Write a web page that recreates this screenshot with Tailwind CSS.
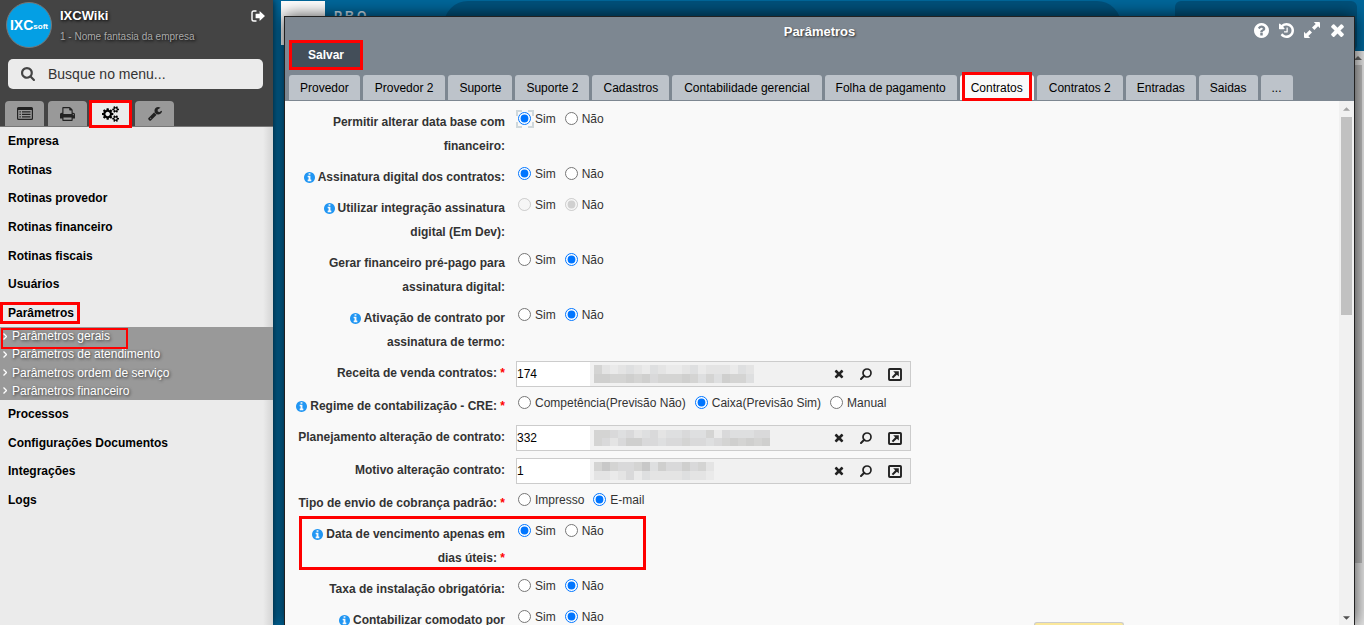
<!DOCTYPE html>
<html lang="pt-BR">
<head>
<meta charset="utf-8">
<title>Parâmetros</title>
<script src="https://cdn.jsdelivr.net/npm/@tailwindcss/browser@4"></script>
</head>
<body class="h-screen overflow-hidden bg-[#00669a] font-['Liberation_Sans',Arial,sans-serif] text-xs text-black">

<svg class="hidden" aria-hidden="true">
  <symbol id="times" viewBox="250 250 1290 1400"><path d="M1490 1322q0 40-28 68l-136 136q-28 28-68 28t-68-28l-294-294-294 294q-28 28-68 28t-68-28l-136-136q-28-28-28-68t28-68l294-294-294-294q-28-28-28-68t28-68l136-136q28-28 68-28t68 28l294 294 294-294q28-28 68-28t68 28l136 136q28 28 28 68t-28 68l-294 294 294 294q28 28 28 68z"/></symbol>
  <symbol id="search" viewBox="64 128 1664 1664"><path d="M1216 832q0-185-131.5-316.5t-316.5-131.5-316.5 131.5-131.5 316.5 131.5 316.5 316.5 131.5 316.5-131.5 131.5-316.5zm512 832q0 52-38 90t-90 38q-54 0-90-38l-343-342q-179 124-399 124-143 0-273.5-55.5t-225-150-150-225-55.5-273.5 55.5-273.5 150-225 225-150 273.5-55.5 273.5 55.5 225 150 150 225 55.5 273.5q0 220-124 399l343 343q37 37 37 90z"/></symbol>
  <symbol id="info" viewBox="128 128 1536 1536"><path d="M1152 1376v-160q0-14-9-23t-23-9h-96v-512q0-14-9-23t-23-9h-320q-14 0-23 9t-9 23v160q0 14 9 23t23 9h96v320h-96q-14 0-23 9t-9 23v160q0 14 9 23t23 9h448q14 0 23-9t9-23zm-128-896v-160q0-14-9-23t-23-9h-192q-14 0-23 9t-9 23v160q0 14 9 23t23 9h192q14 0 23-9t9-23zm640 416q0 209-103 385.5t-279.5 279.5-385.5 103-385.5-103-279.5-279.5-103-385.5 103-385.5 279.5-279.5 385.5-103 385.5 103 279.5 279.5 103 385.5z"/></symbol>
  <symbol id="lens" viewBox="0 0 12 12"><circle cx="7" cy="5" r="4" fill="none" stroke="currentColor" stroke-width="1.7"/><path d="M4.2 7.8L1 11" stroke="currentColor" stroke-width="2" stroke-linecap="round"/></symbol>
  <symbol id="open" viewBox="0 0 14 13"><rect x="1" y="1" width="12" height="11" rx="0.8" fill="none" stroke="currentColor" stroke-width="1.9"/><path d="M5.2 3.2h5.6v5.4L8.9 6.8 5.2 10.3 3.7 8.9 7.2 5.2z"/></symbol>
</svg>

<div class="flex h-full">
  <aside class="relative z-10 w-[273px] shrink-0 bg-[#ebebeb] bg-linear-to-l from-black/10 to-transparent to-[10px] shadow-[0_0_8px_rgba(0,0,0,0.8)]">
    <header class="flex h-[127px] flex-col border-b border-[#777] bg-[#444]">
      <div class="flex gap-2 pl-[6px] pr-2 pt-[2px]">
        <div class="flex size-[46px] shrink-0 items-center justify-center rounded-full border border-[#777] bg-[#049fe4] font-bold text-white">
          <span class="text-[14px]">IXC</span><span class="pt-1 text-[8px]">soft</span>
        </div>
        <div class="flex-1 pt-[5px] [text-shadow:1px_1px_3px_#000]">
          <h1 class="text-[13px] leading-[18px] font-bold text-white">IXCWiki</h1>
          <p class="pt-1 text-[10px] leading-4 text-[#aaa]">1 - Nome fantasia da empresa</p>
        </div>
        <button class="mt-2 h-3 text-white" aria-label="Sair">
          <svg class="h-[12px] w-[14px]" viewBox="0 0 14 12" fill="currentColor"><path d="M5 1H2.8Q1 1 1 2.8v6.4Q1 11 2.8 11H5" fill="none" stroke="currentColor" stroke-width="1.4" stroke-linecap="round"/><path d="M4.6 3.8h4V1L14 6l-5.400 5V8.200h-4z"/></svg>
        </button>
      </div>
      <label class="mx-2 mr-[10px] mt-[11px] flex h-[30px] items-center gap-[13px] rounded-[5px] bg-[#ebebeb] pl-[13px] text-[#444]">
        <svg class="size-[14px]" fill="currentColor"><use href="#search"/></svg>
        <input type="text" placeholder="Busque no menu..." aria-label="Busque no menu" class="min-w-0 flex-1 bg-transparent text-[14px] text-[#333] outline-none placeholder:text-[#333]">
      </label>
      <div class="mt-3 flex flex-1 gap-1 pl-[5px] text-[#222]">
        <button class="flex w-[39px] items-center justify-center rounded-t-[4px] bg-[#999]" aria-label="Menu">
          <svg class="h-[13px] w-4" viewBox="0 0 16 13" fill="currentColor"><path d="M1.500 0h13Q16 0 16 1.500v10Q16 13 14.500 13h-13Q0 13 0 11.500v-10Q0 0 1.500 0zM1.200 3v8.300q0 .5.5.5h12.600q.5 0 .5-.5V3z" fill-rule="evenodd"/><path d="M2.500 4.300h1.300v1.200H2.500zM5 4.300h8.500v1.200H5zM2.500 6.800h1.300V8H2.500zM5 6.800h8.500V8H5zM2.500 9.300h1.300v1.200H2.500zM5 9.300h8.500v1.200H5z"/></svg>
        </button>
        <button class="flex w-[39px] items-center justify-center rounded-t-[4px] bg-[#999]" aria-label="Imprimir">
          <svg class="h-[14px] w-[15px]" viewBox="64 128 1664 1536" fill="currentColor"><path d="M448 1536h896v-256h-896v256zm0-640h896v-384h-160q-40 0-68-28t-28-68v-160h-640v640zm1152 64q0-26-19-45t-45-19-45 19-19 45 19 45 45 19 45-19 19-45zm128 0v416q0 13-9.500 22.500t-22.500 9.500h-224v160q0 40-28 68t-68 28h-960q-40 0-68-28t-28-68v-160h-224q-13 0-22.500-9.500t-9.500-22.500v-416q0-79 56.500-135.500t135.500-56.500h64v-544q0-40 28-68t68-28h672q40 0 88 20t76 48l152 152q28 28 48 76t20 88v256h64q79 0 135.500 56.500t56.500 135.500z"/></svg>
        </button>
        <button class="relative flex w-[39px] items-center justify-center bg-[#ebebeb] text-black" aria-label="Configurações">
          <svg class="h-[16px] w-[17px]" viewBox="0 0 1920 1792" fill="currentColor"><path d="M896 896q0-106-75-181t-181-75-181 75-75 181 75 181 181 75 181-75 75-181zm768 512q0-52-38-90t-90-38-90 38-38 90q0 53 37.500 90.500t90.500 37.500 90.500-37.500 37.500-90.500zm0-1024q0-52-38-90t-90-38-90 38-38 90q0 53 37.500 90.500t90.500 37.500 90.500-37.500 37.500-90.500zm-384 421v185q0 10-7 19.500t-16 10.500l-155 24q-11 35-32 76 34 48 90 115 7 11 7 20 0 12-7 19-23 30-82.500 89.500t-78.500 59.500q-11 0-21-7l-115-90q-37 19-77 31-11 108-23 155-7 24-30 24h-186q-11 0-20-7.500t-10-17.500l-23-153q-34-10-75-31l-118 89q-7 7-20 7-11 0-21-8-144-133-144-160 0-9 7-19 10-14 41-53t47-61q-23-44-35-82l-152-24q-10-1-17-9.500t-7-19.500v-185q0-10 7-19.500t16-10.500l155-24q11-35 32-76-34-48-90-115-7-11-7-20 0-12 7-20 22-30 82-89t79-59q11 0 21 7l115 90q34-18 77-32 11-108 23-154 7-24 30-24h186q11 0 20 7.500t10 17.500l23 153q34 10 75 31l118-89q8-7 20-7 11 0 21 8 144 133 144 160 0 8-7 19-12 16-42 54t-45 60q23 48 34 82l152 23q10 2 17 10.500t7 19.500zm640 533v140q0 16-149 31-12 27-30 52 51 113 51 138 0 4-4 7-122 71-124 71-8 0-46-47t-52-68q-20 2-30 2t-30-2q-14 21-52 68t-46 47q-2 0-124-71-4-3-4-7 0-25 51-138-18-25-30-52-149-15-149-31v-140q0-16 149-31 13-29 30-52-51-113-51-138 0-4 4-7 4-2 35-20t59-34 30-16q8 0 46 46.500t52 67.500q20-2 30-2t30 2q51-71 92-112l6-2q4 0 124 70 4 3 4 7 0 25-51 138 17 23 30 52 149 15 149 31zm0-1024v140q0 16-149 31-12 27-30 52 51 113 51 138 0 4-4 7-122 71-124 71-8 0-46-47t-52-68q-20 2-30 2t-30-2q-14 21-52 68t-46 47q-2 0-124-71-4-3-4-7 0-25 51-138-18-25-30-52-149-15-149-31v-140q0-16 149-31 13-29 30-52-51-113-51-138 0-4 4-7 4-2 35-20t59-34 30-16q8 0 46 46.500t52 67.500q20-2 30-2t30 2q51-71 92-112l6-2q4 0 124 70 4 3 4 7 0 25-51 138 17 23 30 52 149 15 149 31z"/></svg>
          <span class="absolute -inset-x-[2px] -top-px -bottom-[2px] border-[3px] border-[#f00]"></span>
        </button>
        <button class="ml-px flex w-[39px] items-center justify-center rounded-t-[4px] bg-[#999]" aria-label="Ferramentas">
          <svg class="size-[14px]" viewBox="64 128 1664 1664" fill="currentColor"><path d="M448 1472q0-26-19-45t-45-19-45 19-19 45 19 45 45 19 45-19 19-45zm644-420l-682 682q-37 37-90 37-52 0-91-37l-106-108q-38-36-38-90 0-53 38-91l681-681q39 98 114.500 173.500t173.500 114.500zm634-435q0 39-23 106-47 134-164.500 217.500t-258.500 83.500q-185 0-316.500-131.500t-131.500-316.500 131.500-316.500 316.500-131.500q58 0 121.500 16.500t107.500 46.500q16 11 16 28t-16 28l-293 169v224l193 107q5-3 79-48.500t135.500-81 70.500-35.500q15 0 23.500 10t8.500 25z"/></svg>
        </button>
      </div>
    </header>

    <nav class="font-bold">
      <div class="grid h-[200px] auto-rows-fr items-center px-2">
        <a href="#">Empresa</a>
        <a href="#">Rotinas</a>
        <a href="#">Rotinas provedor</a>
        <a href="#">Rotinas financeiro</a>
        <a href="#">Rotinas fiscais</a>
        <a href="#">Usuários</a>
        <a href="#" class="relative w-fit">Parâmetros<span class="absolute -inset-y-[3px] -left-2 -right-[6px] border-[3px] border-[#f00]"></span></a>
      </div>
      <div class="grid h-[73px] auto-rows-fr items-center bg-[#999] pl-[3px] font-normal text-white [text-shadow:1px_1px_3px_#333]">
        <a href="#" class="relative flex w-fit items-center gap-[5px]"><svg class="h-[7px] w-1" viewBox="0 0 4 7" fill="none" stroke="currentColor" stroke-width="1.300"><path d="M.5.5l3 3-3 3"/></svg>Parâmetros gerais<span class="absolute top-0 -bottom-[5px] -left-[2px] -right-[18px] border-2 border-[#f00]"></span></a>
        <a href="#" class="flex items-center gap-[5px]"><svg class="h-[7px] w-1" viewBox="0 0 4 7" fill="none" stroke="currentColor" stroke-width="1.300"><path d="M.5.5l3 3-3 3"/></svg>Parâmetros de atendimento</a>
        <a href="#" class="flex items-center gap-[5px]"><svg class="h-[7px] w-1" viewBox="0 0 4 7" fill="none" stroke="currentColor" stroke-width="1.300"><path d="M.5.5l3 3-3 3"/></svg>Parâmetros ordem de serviço</a>
        <a href="#" class="flex items-center gap-[5px]"><svg class="h-[7px] w-1" viewBox="0 0 4 7" fill="none" stroke="currentColor" stroke-width="1.300"><path d="M.5.5l3 3-3 3"/></svg>Parâmetros financeiro</a>
      </div>
      <div class="grid h-[114px] auto-rows-fr items-center px-2">
        <a href="#">Processos</a>
        <a href="#">Configurações Documentos</a>
        <a href="#">Integrações</a>
        <a href="#">Logs</a>
      </div>
    </nav>
  </aside>

  <main class="relative min-w-0 flex-1">
    <!-- page behind the dialog -->
    <div class="flex h-full flex-col">
      <div class="flex h-[51px] items-start pl-2 pr-[7px] pt-px">
        <div class="h-11 w-11 bg-white"></div>
        <div class="w-[119px] pl-[9px] pt-[7px] text-[12px] font-bold whitespace-nowrap text-[#c5d9e4]">P R O —</div>
        <div class="h-full flex-1 rounded-t-[24px] bg-[#00517b]"></div>
        <div class="ml-[54px] h-full w-[182px] rounded-[6px] bg-[#00517b]"></div>
      </div>
      <div class="flex flex-1 justify-end">
        <div class="flex w-3 flex-col items-center bg-[#e6e6e6]">
          <svg class="my-[5px] h-[4px] w-2" viewBox="0 0 8 4" fill="#666"><path d="M0 4l4-4 4 4z"/></svg>
          <div class="mb-[62px] mr-[2px] w-[10px] flex-1 bg-[#bdbdbd]"></div>
        </div>
      </div>
    </div>

    <section role="dialog" aria-labelledby="title" class="absolute bottom-0 left-[11px] right-[9px] top-4 flex flex-col overflow-visible border-x border-t border-[#222] bg-[#f9f9f9] shadow-[0_0_16px_rgba(0,0,0,0.75)]">
      <header class="border-b border-[#7d8791] bg-[#7d8791] px-1">
        <div class="grid h-[23px] grid-cols-[1fr_auto_1fr] items-end text-white">
          <h2 id="title" class="col-start-2 text-[13px] leading-4 font-bold [text-shadow:1px_1px_2px_#333]">Parâmetros</h2>
          <div class="flex items-center justify-end gap-[10px] pr-[5px] pb-[2px]">
            <button aria-label="Ajuda"><svg class="size-[15px]" viewBox="128 128 1536 1536" fill="currentColor"><path d="M1024 1376v-192q0-14-9-23t-23-9h-192q-14 0-23 9t-9 23v192q0 14 9 23t23 9h192q14 0 23-9t9-23zm256-672q0-88-55.500-163t-138.500-116-170-41q-243 0-371 213-15 24 8 42l132 100q7 6 19 6 16 0 25-12 53-68 86-92 34-24 86-24 48 0 85.500 26t37.500 59q0 38-20 61t-68 45q-63 28-115.500 86.500t-52.500 125.500v36q0 14 9 23t23 9h192q14 0 23-9t9-23q0-19 21.500-49.500t54.500-49.500q32-18 49-28.500t46-35 44.500-48 28-60.500 12.500-81zm384 192q0 209-103 385.500t-279.500 279.500-385.500 103-385.500-103-279.500-279.500-103-385.500 103-385.500 279.500-279.500 385.500-103 385.500 103 279.500 279.500 103 385.500z"/></svg></button>
            <button aria-label="Histórico"><svg class="size-[15px]" viewBox="128 128 1536 1536" fill="currentColor"><path d="M1664 896q0 156-61 298t-164 245-245 164-298 61q-172 0-327-72.500t-264-204.500q-7-10-6.500-22.500t8.500-20.500l137-138q10-9 25-9 16 2 23 12 73 95 179 147t225 52q104 0 198.500-40.500t163.500-109.500 109.500-163.500 40.500-198.500-40.500-198.500-109.500-163.500-163.500-109.500-198.500-40.500q-98 0-188 35.500t-160 101.500l137 138q31 30 14 69-17 40-59 40h-448q-26 0-45-19t-19-45v-448q0-42 40-59 39-17 69 14l130 129q107-101 244.500-156.500t284.500-55.500q156 0 298 61t245 164 164 245 61 298zm-640-288v448q0 14-9 23t-23 9h-320q-14 0-23-9t-9-23v-64q0-14 9-23t23-9h224v-352q0-14 9-23t23-9h64q14 0 23 9t9 23z"/></svg></button>
            <button aria-label="Expandir"><svg class="size-[16px]" viewBox="0 0 16 16" fill="currentColor"><path d="M9.800 0H15q1 0 1 1v5.200L14.100 4.300 10.400 8 8 5.600 11.700 1.900zM6.200 16H1q-1 0-1-1V9.800L1.900 11.700 5.600 8 8 10.400 4.300 14.100z"/></svg></button>
            <button aria-label="Fechar"><svg class="size-[15px]" fill="currentColor"><use href="#times"/></svg></button>
          </div>
        </div>
        <button class="block h-[30px] w-[74px] border-[3px] border-[#f00] bg-[#434e59] text-xs font-bold text-white">Salvar</button>
        <div role="tablist" class="mt-[5px] flex h-[25px] gap-[3px] [&>button]:whitespace-nowrap [&>button]:rounded-t-[3px]">
          <button role="tab" class="bg-[#bdc3ca] px-[11px]">Provedor</button>
          <button role="tab" class="bg-[#bdc3ca] px-3">Provedor 2</button>
          <button role="tab" class="bg-[#bdc3ca] px-[11px]">Suporte</button>
          <button role="tab" class="bg-[#bdc3ca] px-[11px]">Suporte 2</button>
          <button role="tab" class="bg-[#bdc3ca] px-[11px]">Cadastros</button>
          <button role="tab" class="bg-[#bdc3ca] px-3">Contabilidade gerencial</button>
          <button role="tab" class="bg-[#bdc3ca] px-[11px]">Folha de pagamento</button>
          <button role="tab" aria-selected="true" class="relative bg-[#f9f9f9] px-[11px]">Contratos<span class="absolute -top-[3px] -bottom-px left-[2px] right-[2px] border-[3px] border-[#f00]"></span></button>
          <button role="tab" class="bg-[#bdc3ca] px-3">Contratos 2</button>
          <button role="tab" class="bg-[#bdc3ca] px-[11px]">Entradas</button>
          <button role="tab" class="bg-[#bdc3ca] px-[11px]">Saidas</button>
          <button role="tab" class="bg-[#bdc3ca] px-[11px]">...</button>
        </div>
      </header>

      <div class="flex min-h-0 flex-1">
        <form id="form" class="flex min-w-0 flex-1 flex-col gap-[7px] overflow-hidden pl-[6px] pt-[9px] text-[#333]"></form>
        <div class="flex w-[15px] flex-col items-center bg-[#f1f1f1]">
          <svg class="my-[6px] h-[4px] w-[7px] shrink-0" viewBox="0 0 8 4" fill="#a3a3a3"><path d="M0 4l4-4 4 4z"/></svg>
          <div class="h-[198px] w-[11px] bg-[#c1c1c1]"></div>
          <svg class="mb-[5px] mt-auto h-[4px] w-[7px] shrink-0" viewBox="0 0 8 4" fill="#505050"><path d="M0 0l4 4 4-4z"/></svg>
        </div>
      </div>
      <div class="absolute bottom-0 right-[230px] h-[3px] w-[90px] rounded-t-[3px] border-x border-t border-[#ccc] bg-[#fbe89b]"></div>
    </section>
  </main>
</div>

<script>
// Field definitions: options are radios ("*" marks the checked one), value marks a lookup field.
const fields = [
  { label: 'Permitir alterar data base com financeiro:', options: ['*Sim', 'Não'], focus: true },
  { label: 'Assinatura digital dos contratos:', info: true, options: ['*Sim', 'Não'] },
  { label: 'Utilizar integração assinatura digital (Em Dev):', info: true, options: ['Sim', '*Não'], disabled: true },
  { label: 'Gerar financeiro pré-pago para assinatura digital:', options: ['Sim', '*Não'] },
  { label: 'Ativação de contrato por assinatura de termo:', info: true, options: ['Sim', '*Não'] },
  { label: 'Receita de venda contratos:', required: true, value: '174', cell: 9,
    mosaic: ['36765675677657666756', '22332324333235352335'] },
  { label: 'Regime de contabilização - CRE:', info: true, required: true, options: ['Competência(Previsão Não)', '*Caixa(Previsão Sim)', 'Manual'] },
  { label: 'Planejamento alteração de contrato:', value: '332', cell: 8,
    mosaic: ['3345465465545537455544', '3464224454434454323232'] },
  { label: 'Motivo alteração contrato:', value: '1', cell: 9,
    mosaic: ['313443152442436', '667647566665667'] },
  { label: 'Tipo de envio de cobrança padrão:', required: true, options: ['Impresso', '*E-mail'] },
  { label: 'Data de vencimento apenas em dias úteis:', info: true, required: true, options: ['*Sim', 'Não'], marked: true },
  { label: 'Taxa de instalação obrigatória:', options: ['Sim', '*Não'] },
  { label: 'Contabilizar comodato por', info: true, options: ['Sim', '*Não'] },
];
const shades = ['#c4c4c4', '#c8c8c8', '#cfcfce', '#d4d4d3', '#d9d9da', '#dedfe0', '#e4e4e4', '#eaeaea', '#efefef'];

const mosaic = f => `<svg class="ml-1 shrink-0" width="${f.mosaic[0].length * 8}" height="${f.cell * 2}" shape-rendering="crispEdges">` +
  f.mosaic.map((row, y) => [...row].map((c, x) =>
    `<rect x="${x * 8}" y="${y * f.cell}" width="8" height="${f.cell}" fill="${shades[c]}"/>`).join('')).join('') + '</svg>';

const radios = (f, i) => `<div role="radiogroup" aria-labelledby="l${i}" class="flex h-[17px] items-center gap-[9px] pl-[2px]">` +
  f.options.map((o, n) => {
    const on = o[0] === '*';
    return `<label class="relative flex items-center gap-[4px]"><input type="radio" name="f${i}" class="size-[13px]" ${on ? 'checked' : ''} ${f.disabled ? 'disabled' : ''}>${on ? o.slice(1) : o}` +
      (f.focus && n === 0 ? '<svg class="absolute -left-[2px] -top-px size-[18px]" viewBox="0 0 18 18" fill="none" stroke="#cfd8dc" stroke-width="2"><path d="M1 6V1h5M12 1h5v5M17 12v5h-5M6 17H1v-5"/></svg>' : '') + '</label>';
  }).join('') + '</div>';

const lookup = (f, i) => `<div class="flex h-[26px] w-[395px] items-center border border-[#ccc] bg-[#f1f1f1]">
  <input id="f${i}" type="text" value="${f.value}" class="h-full w-[73px] bg-white text-xs text-black outline-none">
  ${mosaic(f)}
  <div class="ml-auto flex items-center gap-[16px] pr-2 text-[#222]">
    <button type="button" aria-label="Limpar"><svg class="size-[10px]" fill="currentColor"><use href="#times"/></svg></button>
    <button type="button" aria-label="Pesquisar"><svg class="size-3" fill="currentColor"><use href="#lens"/></svg></button>
    <button type="button" aria-label="Abrir"><svg class="h-[13px] w-[14px]" fill="currentColor"><use href="#open"/></svg></button>
  </div></div>`;

document.getElementById('form').innerHTML = fields.map((f, i) => {
  const tag = f.value ? 'label' : 'span';
  return `<div class="relative flex gap-[11px]">
    <${tag} id="l${i}" ${f.value ? `for="f${i}"` : ''} class="w-[214px] shrink-0 text-right leading-6 font-bold">${f.info ? '<svg class="mr-[3px] inline size-[11px] align-[-2px] text-[#2196f3]" fill="currentColor"><use href="#info"/></svg>' : ''}${f.label}${f.required ? ' <span class="text-[#f00]">*</span>' : ''}</${tag}>
    ${f.value ? lookup(f, i) : radios(f, i)}
    ${f.marked ? '<span class="pointer-events-none absolute -top-[6px] left-[8px] h-[54px] w-[347px] border-[3px] border-[#f00]"></span>' : ''}
  </div>`;
}).join('');
</script>
</body>
</html>
